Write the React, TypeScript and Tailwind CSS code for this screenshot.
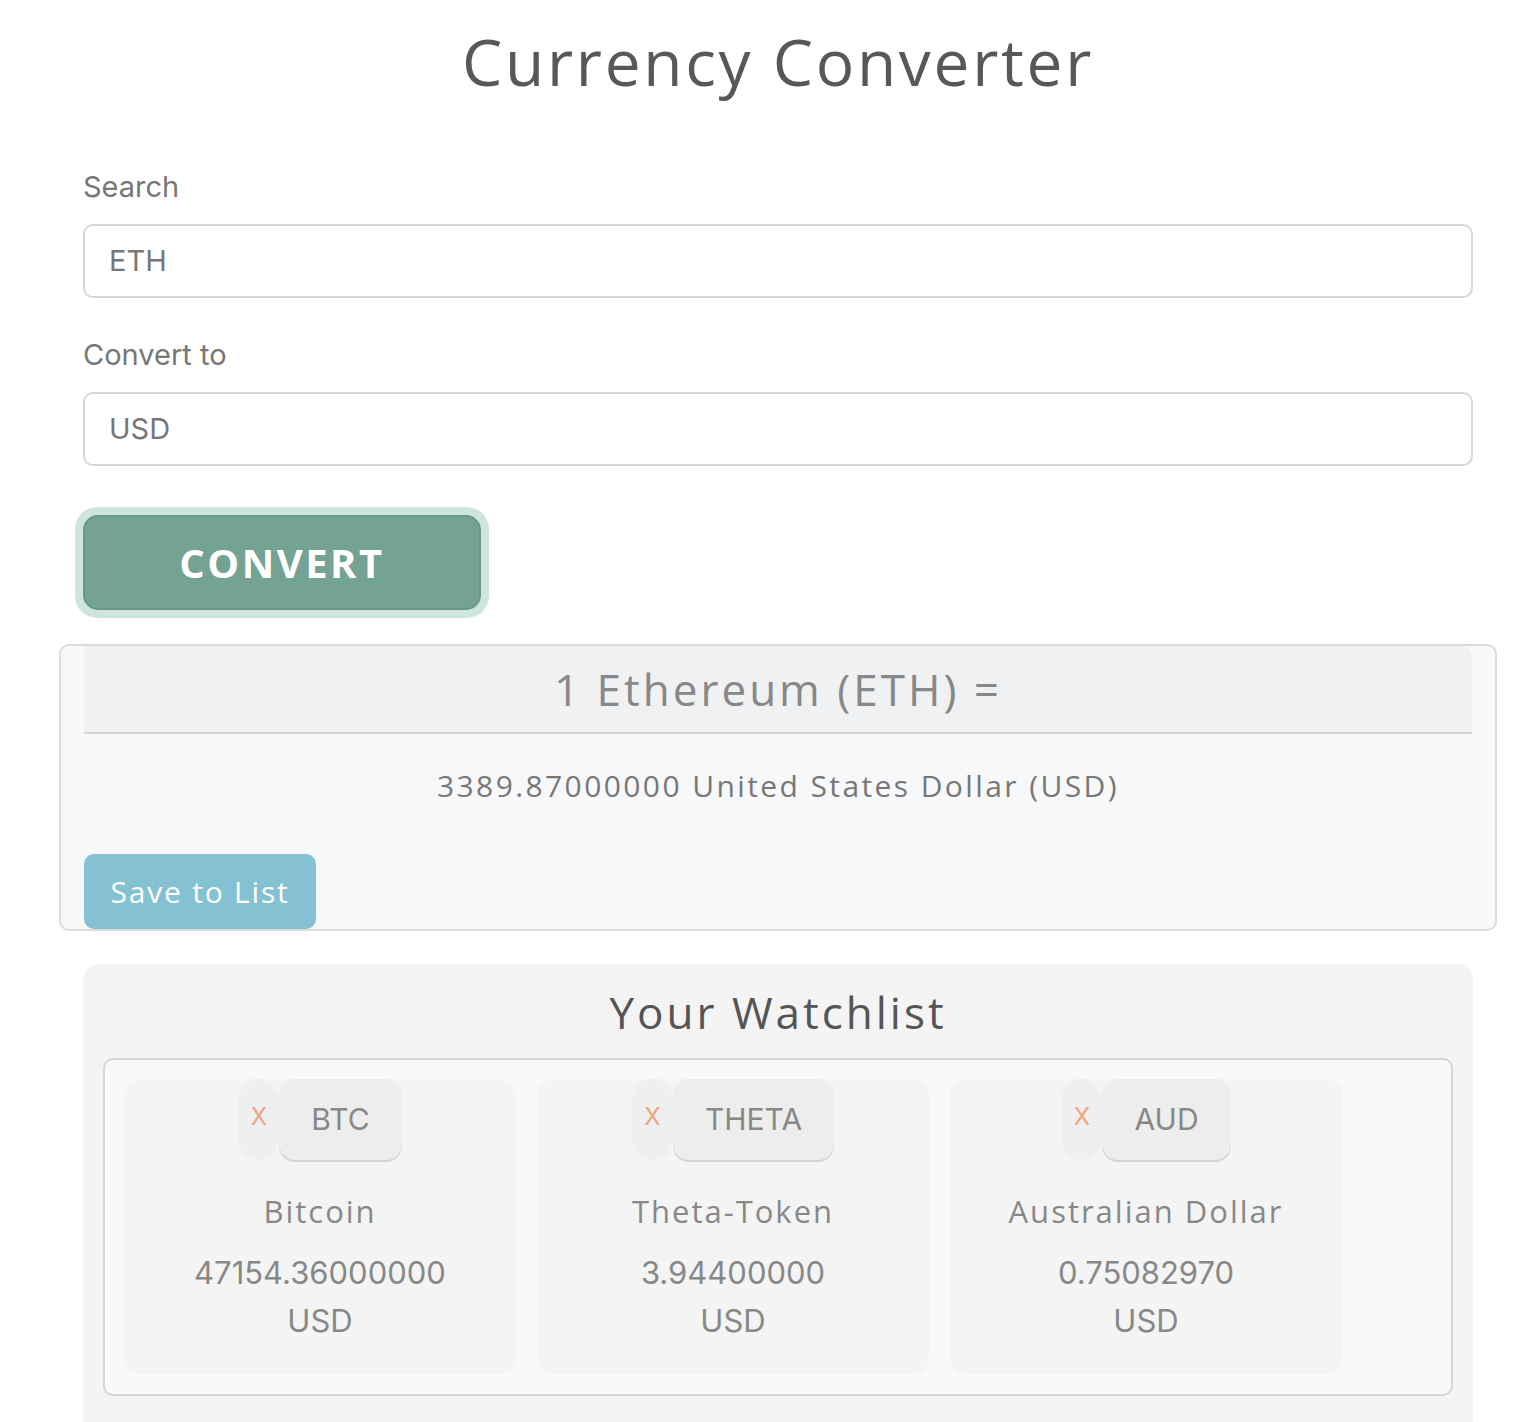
import React from "react";

const items = [
  { code: "BTC", name: "Bitcoin", value: "47154.36000000" },
  { code: "THETA", name: "Theta-Token", value: "3.94400000" },
  { code: "AUD", name: "Australian Dollar", value: "0.75082970" },
];

function Card({ code, name, value }: { code: string; name: string; value: string }) {
  return (
    <div className="w-[392px] h-[295px] rounded-[16px] bg-[#f4f4f4] flex flex-col items-center">
      <div className="flex">
        <div className="w-[41px] h-[81px] rounded-full bg-[#efefef] flex items-start justify-center pt-[20px] text-[24px] text-[#f0a47e]">
          X
        </div>
        <div className="h-[81px] px-[32px] rounded-[16px] bg-[#ededed] shadow-[0_2px_0_#d4d4d4] flex items-center text-[30px] text-[#888]">
          {code}
        </div>
      </div>
      <div className="mt-[31px] text-[31px] text-[#888] font-medium leading-[40px] tracking-[2px] font-['Open_Sans',sans-serif]">
        {name}
      </div>
      <div className="mt-[22px] text-[31px] text-[#888] leading-[40px]">{value}</div>
      <div className="mt-[8px] text-[31px] text-[#888] leading-[40px]">USD</div>
    </div>
  );
}

export default function App() {
  return (
    <div className="w-[1540px] h-[1422px] overflow-hidden bg-white font-['Inter','Liberation_Sans',sans-serif]">
      <div className="ml-[83px] w-[1390px]">
        <h1 className="text-center text-[64px] leading-[80px] pt-[22px] text-[#585858] font-medium tracking-[2.7px] font-['Open_Sans',sans-serif]">
          Currency Converter
        </h1>

        <div className="mt-[67px] text-[29px] leading-[36px] text-[#777]">Search</div>
        <div className="mt-[19px] h-[74px] rounded-[10px] border-2 border-[#d4d7da] flex items-center pl-[24px] text-[29px] text-[#777]">
          ETH
        </div>

        <div className="mt-[39px] text-[29px] leading-[36px] text-[#777]">Convert to</div>
        <div className="mt-[19px] h-[74px] rounded-[10px] border-2 border-[#d4d7da] flex items-center pl-[24px] text-[29px] text-[#777]">
          USD
        </div>

        <div className="mt-[41px] -ml-[8px] w-[414px] h-[111px] rounded-[22px] bg-[#cee5dd] p-[8px]">
          <div className="w-full h-full rounded-[15px] bg-[#74a393] border-2 border-[#6a9888] flex items-center justify-center text-white font-bold text-[40px] tracking-[2.5px] font-['Open_Sans',sans-serif]">
            CONVERT
          </div>
        </div>

        <div className="mt-[26px] -mx-[24px] rounded-[10px] border-2 border-[#dcdcde] bg-[#f7f8fa] px-[23px]">
          <div className="h-[88px] rounded-tr-[10px] bg-[#f0f1f3] border-b-2 border-[#d3d4d6] flex items-center justify-center text-[44px] text-[#888] font-medium tracking-[3px] font-['Open_Sans',sans-serif]">
            1 Ethereum (ETH) =
          </div>
          <div className="mt-[32px] text-center text-[30px] leading-[40px] text-[#777] font-medium tracking-[2.4px] font-['Open_Sans',sans-serif]">
            3389.87000000 United States Dollar (USD)
          </div>
          <div className="mt-[48px] w-[232px] h-[75px] rounded-[10px] bg-[#84c1d2] flex items-center justify-center text-white text-[30px] tracking-[1.8px] font-['Open_Sans',sans-serif]">
            Save to List
          </div>
        </div>

        <div className="mt-[33px] rounded-t-[16px] bg-[#f4f4f4] px-[20px] pb-[40px]">
          <div className="text-center text-[44px] leading-[56px] pt-[20px] text-[#555] font-medium tracking-[3px] font-['Open_Sans',sans-serif]">
            Your Watchlist
          </div>
          <div className="mt-[18px] rounded-[10px] border-2 border-[#d6d6d6] bg-[#f8f9fa] p-[19px] flex gap-[21px] h-[338px]">
            {items.map((it) => (
              <Card key={it.code} {...it} />
            ))}
          </div>
        </div>
      </div>
    </div>
  );
}
